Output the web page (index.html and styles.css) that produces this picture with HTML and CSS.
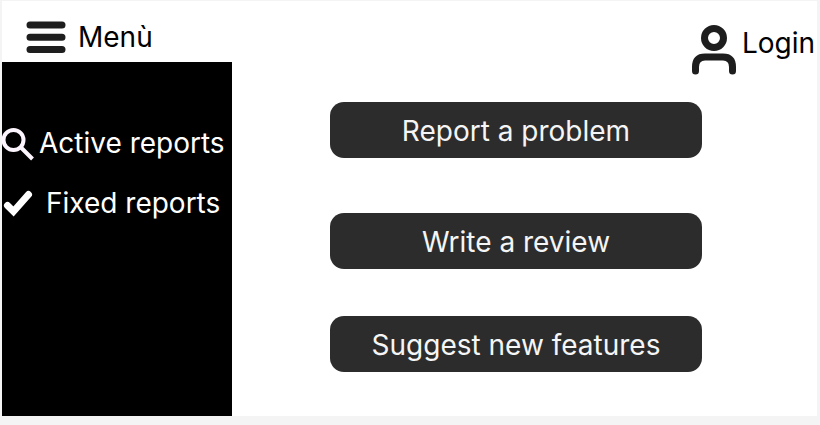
FILE: index.html
```html
<!DOCTYPE html>
<html lang="en">
<head>
<meta charset="utf-8">
<meta name="viewport" content="width=device-width, initial-scale=1">
<title>Reports</title>
<link rel="stylesheet" href="styles.css">
</head>
<body>
<div class="screen">
  <header class="topbar">
    <button class="menu" type="button">
      <svg class="menu-icon" width="40" height="32" viewBox="0 0 40 32" aria-hidden="true">
        <path d="M4 4H36M4 16.300H36M4 28.500H36"/>
      </svg>
      <span>Menù</span>
    </button>
    <a class="login" href="#">
      <svg class="user-icon" width="46" height="50" viewBox="0 0 46 50" aria-hidden="true">
        <circle cx="23" cy="13" r="9.500"/>
        <path d="M4.500 46V42Q4.500 32 14 32H32Q41.500 32 41.500 42V46"/>
      </svg>
      <span>Login</span>
    </a>
  </header>
  <div class="content">
    <nav class="sidebar">
      <a class="nav-link" href="#">
        <svg class="search-icon" width="32" height="32" viewBox="0 0 32 32" aria-hidden="true">
          <circle cx="11.500" cy="13" r="10"/>
          <path d="M18.500 20L30.500 32"/>
        </svg>
        <span>Active reports</span>
      </a>
      <a class="nav-link nav-link-fixed" href="#">
        <svg class="check-icon" width="32" height="32" viewBox="0 0 32 32" aria-hidden="true">
          <path d="M5.500 18.500L11.500 24.500L26.500 7.500"/>
        </svg>
        <span>Fixed reports</span>
      </a>
    </nav>
    <main class="actions">
      <button class="action" type="button">Report a problem</button>
      <button class="action" type="button">Write a review</button>
      <button class="action" type="button">Suggest new features</button>
    </main>
  </div>
</div>
</body>
</html>
```
FILE: styles.css
```css
* {
  box-sizing: border-box;
}

body {
  margin: 0;
  background: #f4f4f4;
  color: #000;
  font: 400 28px/36px Inter, "Liberation Sans", sans-serif;
}

button {
  border: 0;
  padding: 0;
  background: none;
  color: inherit;
  font: inherit;
  cursor: pointer;
}

a {
  color: inherit;
  text-decoration: none;
}

svg {
  flex: none;
  overflow: visible;
  fill: none;
  stroke: #1e1e1e;
  stroke-linecap: round;
}

.screen {
  display: flex;
  flex-direction: column;
  min-height: calc(100vh - 10px);
  margin: 0 3px 9px 2px;
  border-top: 1px solid #f4f4f4;
  background: #fff;
}

.topbar {
  display: flex;
  justify-content: space-between;
  height: 61px;
  padding: 17px 2px 0 24px;
}

.menu {
  display: flex;
  align-items: center;
  gap: 12px;
  height: 38px;
}

.menu-icon {
  stroke-width: 7;
}

.login {
  display: flex;
  gap: 5px;
  padding-top: 7px;
}

.user-icon {
  stroke-width: 7;
}

.content {
  display: flex;
  flex: 1;
}

.sidebar {
  display: flex;
  flex: none;
  flex-direction: column;
  gap: 24px;
  width: 230px;
  padding-top: 63px;
  background: #000;
  color: #fff;
}

.nav-link {
  display: flex;
  align-items: center;
  gap: 5px;
  white-space: nowrap;
}

.nav-link-fixed {
  gap: 12px;
}

.search-icon {
  stroke: #fdf5fd;
  stroke-width: 4;
  stroke-linecap: butt;
}

.check-icon {
  stroke: #fff;
  stroke-width: 7;
}

.actions {
  display: grid;
  flex: 1;
  grid-template-rows: 111px 103px 56px;
  align-items: start;
  padding: 40px 115px 44px 98px;
}

.action {
  height: 56px;
  padding-top: 2px;
  border-radius: 14px;
  background: #2c2c2c;
  color: #f5f5f5;
}
```
